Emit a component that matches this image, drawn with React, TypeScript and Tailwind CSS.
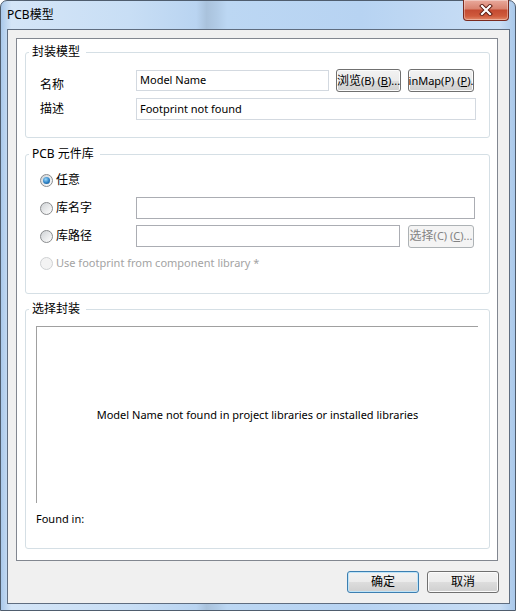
import React from 'react';

const FONT = "font-['Noto_Sans','Noto_Sans_CJK_SC',sans-serif]";

function Radio({ checked = false, disabled = false }: { checked?: boolean; disabled?: boolean }) {
  return (
    <span
      className={`w-[13px] h-[13px] shrink-0 rounded-full border flex items-center justify-center ${
        disabled
          ? 'border-[#cfd1d3] bg-[#f3f3f3]'
          : 'border-[#8a8c8e] bg-[linear-gradient(135deg,#cfd2d5,#ffffff)]'
      }`}
    >
      {checked && (
        <span className="w-[7px] h-[7px] rounded-full bg-[radial-gradient(circle_at_40%_35%,#9ad8fb,#2b80c4_55%,#114a7e)]" />
      )}
    </span>
  );
}

function Button({
  children,
  className = '',
  disabled = false,
  primary = false,
}: {
  children: React.ReactNode;
  className?: string;
  disabled?: boolean;
  primary?: boolean;
}) {
  const look = disabled
    ? 'border-[#adb2b5] bg-[#f4f4f4] text-[#838383]'
    : primary
    ? 'border-[#3c7fb1] bg-[linear-gradient(#f2f2f2,#ebebeb_50%,#dddddd_51%,#cfcfcf)] shadow-[inset_0_0_0_1px_#bfe4f8] text-black'
    : 'border-[#707070] bg-[linear-gradient(#f2f2f2,#ebebeb_50%,#dddddd_51%,#cfcfcf)] shadow-[inset_0_0_0_1px_#fbfbfb] text-black';
  return (
    <div
      className={`border rounded-[3px] flex items-center justify-center overflow-hidden whitespace-nowrap leading-[14px] ${look} ${className}`}
    >
      {children}
    </div>
  );
}

function Group({ title, className = '', children }: { title: string; className?: string; children: React.ReactNode }) {
  return (
    <div className={`relative ml-[8px] w-[465px] border border-[#d5dfe5] rounded-[3px] ${className}`}>
      <span className="absolute left-[3px] top-[-8px] bg-white px-[3px] pr-[6px] text-[12px] leading-[14px] text-black">
        {title}
      </span>
      {children}
    </div>
  );
}

export default function App() {
  return (
    <div className={`w-[516px] h-[611px] bg-white ${FONT}`}>
      <div className="w-[516px] h-[611px] flex flex-col border border-[#4f5d6e] rounded-t-[7px] bg-[linear-gradient(90deg,#a9c8ea_0%,#d4e5f7_2%,#c8def5_25%,#b9d4f1_38%,#a9c2dc_40%,#b1cbe6_42%,#bcd7f3_44%,#b7d3f2_70%,#c9def5_97%,#a9c8ea_100%)]">
        {/* Title bar */}
        <div className="h-[28px] flex items-start shrink-0">
          <div className="pl-[6px] pt-[6px] text-[12px] leading-[16px] text-black">PCB模型</div>
          <div className="ml-auto mr-[6px] mt-[-1px] w-[46px] h-[21px] rounded-b-[4px] border border-[#7a2a1f] border-t-0 bg-[linear-gradient(#e9a99c,#d8826f_45%,#c44a31_50%,#cf5a3c_80%,#e2896a)] shadow-[inset_0_0_0_1px_rgba(255,255,255,0.35)] flex items-center justify-center">
            <svg width="14" height="12" viewBox="0 0 14 12">
              <path d="M3 2 L11 10 M11 2 L3 10" stroke="#5a1a10" strokeWidth="4" strokeLinecap="square" />
              <path d="M3 2 L11 10 M11 2 L3 10" stroke="#ffffff" strokeWidth="2.2" strokeLinecap="square" />
            </svg>
          </div>
        </div>

        {/* Client area */}
        <div className="ml-[6px] w-[503px] h-[575px] border border-[#5f6d80] bg-[#f0f0f0] pt-[8px] pl-[8px] flex flex-col">
          <div className="w-[482px] h-[523px] border border-[#828790] bg-white flex flex-col">
            {/* 封装模型 */}
            <Group title="封装模型" className="mt-[13px] h-[86px] pt-[16px] pl-[14px]">
              <div className="flex items-center h-[23px]">
                <span className="w-[96px] mt-[8px] text-[12px] leading-[16px]">名称</span>
                <div className="w-[193px] h-[21px] border border-[#d3d9e0] pl-[3px] flex items-center text-[11px]">
                  Model Name
                </div>
                <Button className="ml-[7px] w-[65px] h-[23px] text-[11px]">
                  <span className="text-[12px]">浏览</span>(B) (<span className="underline">B</span>)...
                </Button>
                <Button className="ml-[7px] w-[66px] h-[23px] text-[11px]">
                  inMap(P) (<span className="underline">P</span>).
                </Button>
              </div>
              <div className="flex items-center h-[22px] mt-[6px]">
                <span className="w-[96px] text-[12px] leading-[16px]">描述</span>
                <div className="w-[340px] h-[22px] border border-[#d3d9e0] pl-[3px] flex items-center text-[11px]">
                  Footprint not found
                </div>
              </div>
            </Group>

            {/* PCB 元件库 */}
            <Group title="PCB 元件库" className="mt-[16px] h-[140px] pt-[14px] pl-[14px]">
              <div className="flex items-center h-[22px]">
                <Radio checked />
                <span className="ml-[3px] text-[12px]">任意</span>
              </div>
              <div className="flex items-center h-[22px] mt-[6px]">
                <div className="w-[96px] flex items-center">
                  <Radio />
                  <span className="ml-[3px] text-[12px]">库名字</span>
                </div>
                <div className="w-[339px] h-[22px] border border-[#abadb3]" />
              </div>
              <div className="flex items-center h-[22px] mt-[6px]">
                <div className="w-[96px] flex items-center">
                  <Radio />
                  <span className="ml-[3px] text-[12px]">库路径</span>
                </div>
                <div className="w-[264px] h-[22px] border border-[#abadb3]" />
                <Button disabled className="ml-[8px] w-[66px] h-[23px] text-[11px]">
                  <span className="text-[12px]">选择</span>(C) (<span className="underline">C</span>)...
                </Button>
              </div>
              <div className="flex items-center h-[22px] mt-[5px]">
                <Radio disabled />
                <span className="ml-[3px] text-[11px] text-[#a3a3a3]">Use footprint from component library *</span>
              </div>
            </Group>

            {/* 选择封装 */}
            <Group title="选择封装" className="mt-[15px] h-[240px] pt-[16px] pl-[10px]">
              <div className="w-[442px] h-[177px] border-t border-l border-[#a0a0a0] flex items-center justify-center text-[11px]">
                Model Name not found in project libraries or installed libraries
              </div>
              <div className="mt-[8px] text-[11px] leading-[16px]">Found in:</div>
            </Group>
          </div>

          {/* Bottom buttons */}
          <div className="mt-[10px] pr-[10px] flex justify-end gap-[8px]">
            <Button primary className="w-[72px] h-[22px] text-[12px]">确定</Button>
            <Button className="w-[72px] h-[22px] text-[12px]">取消</Button>
          </div>
        </div>
      </div>
    </div>
  );
}
